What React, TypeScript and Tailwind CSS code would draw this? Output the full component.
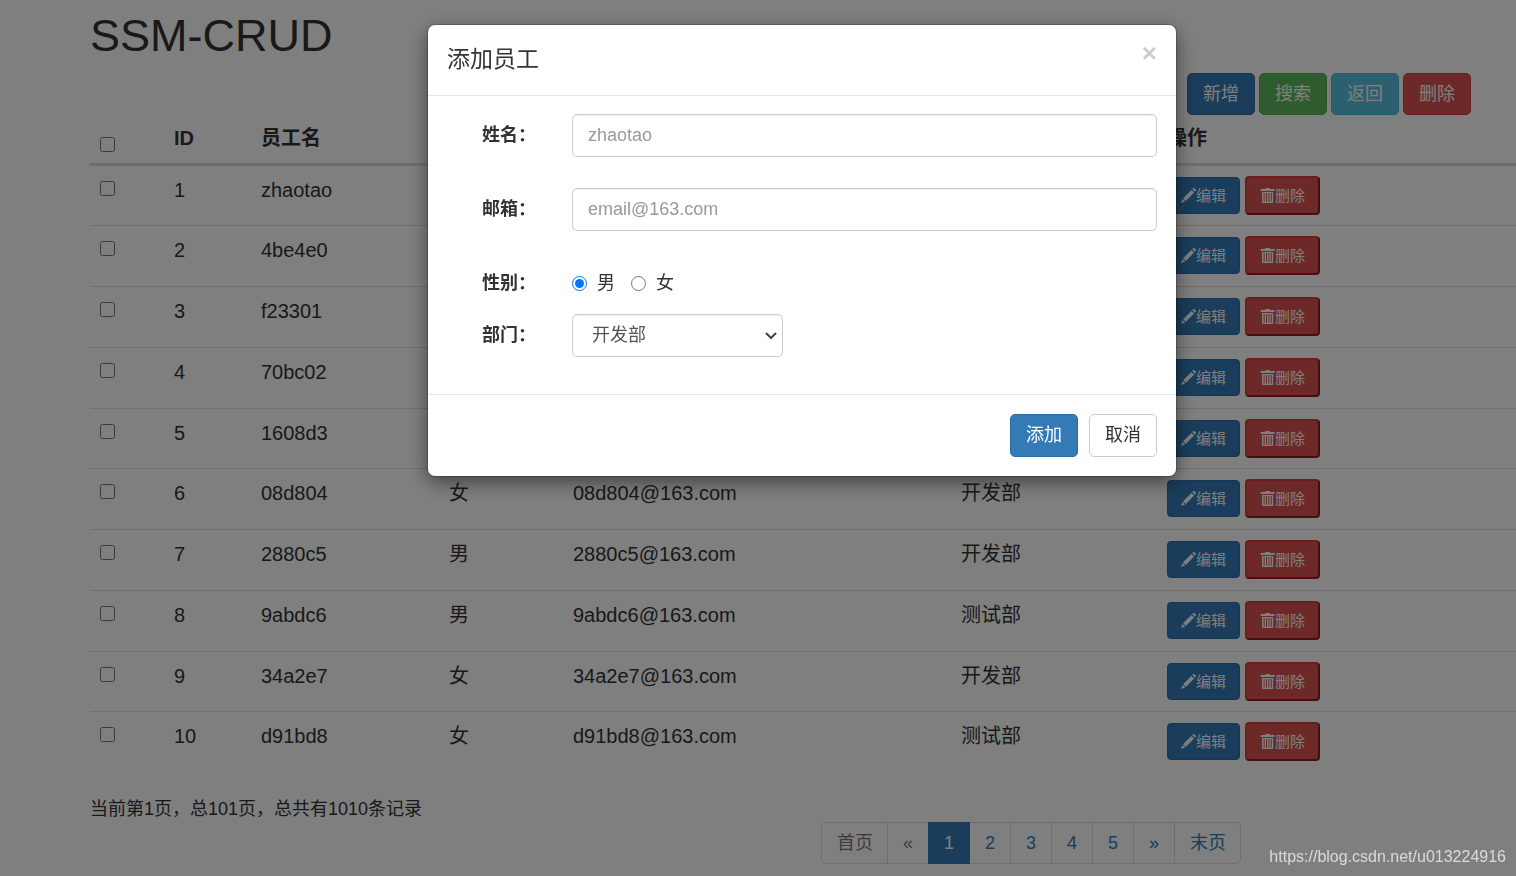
import { useState } from "react";
import clsx from "clsx";

interface Employee {
  id: number;
  name: string;
  gender: string;
  dept: string;
}

const employees: Employee[] = [
  { id: 1, name: "zhaotao", gender: "男", dept: "开发部" },
  { id: 2, name: "4be4e0", gender: "女", dept: "测试部" },
  { id: 3, name: "f23301", gender: "男", dept: "开发部" },
  { id: 4, name: "70bc02", gender: "女", dept: "测试部" },
  { id: 5, name: "1608d3", gender: "男", dept: "开发部" },
  { id: 6, name: "08d804", gender: "女", dept: "开发部" },
  { id: 7, name: "2880c5", gender: "男", dept: "开发部" },
  { id: 8, name: "9abdc6", gender: "男", dept: "测试部" },
  { id: 9, name: "34a2e7", gender: "女", dept: "开发部" },
  { id: 10, name: "d91bd8", gender: "女", dept: "测试部" },
];

const toolbar = [
  { label: "新增", style: "bg-[#337ab7] border-[#2e6da4]" },
  { label: "搜索", style: "bg-[#5cb85c] border-[#4cae4c]" },
  { label: "返回", style: "bg-[#5bc0de] border-[#46b8da]" },
  { label: "删除", style: "bg-[#d9534f] border-[#d43f3a]" },
];

const pages = ["首页", "«", "1", "2", "3", "4", "5", "»", "末页"];

const button = "rounded-[5px] border px-[15px] text-[18px] leading-[25px]";
const field =
  "h-[43px] rounded-[5px] border border-[#ccc] bg-white text-[18px] text-[#555] shadow-[inset_0_1px_1px_rgba(0,0,0,0.075)] outline-none placeholder:text-[#999]";
const label = "w-[126px] shrink-0 pr-[18px] text-right font-bold";

function PencilIcon() {
  return (
    <svg viewBox="0 0 15 15" className="size-[15px]" fill="currentColor" aria-hidden="true">
      <path d="M11.2 1.1l.8-.8a1 1 0 0 1 1.4 0l1.300 1.300a1 1 0 0 1 0 1.400l-.8.8zM10.400 1.900l2.700 2.700-8.300 8.300-2.700-2.700zM1.500 10.900l2.600 2.600L0 15z" />
    </svg>
  );
}

function TrashIcon() {
  return (
    <svg viewBox="0 0 15 15" className="size-[15px]" fill="currentColor" aria-hidden="true">
      <path
        fillRule="evenodd"
        d="M5 1V.6a.6.6 0 0 1 .6-.6h3.800a.6.6 0 0 1 .6.6V1h4a.6.6 0 0 1 .6.6V3H.6V1.600A.6.6 0 0 1 1.200 1zM2 4h11.200v10a1 1 0 0 1-1 1H3a1 1 0 0 1-1-1zM3.600 5v8.700h1V5zM6 5v8.700h1V5zM8.400 5v8.700h1V5zM10.800 5v8.700h1V5z"
      />
    </svg>
  );
}

function EmployeeTable() {
  return (
    <table className="w-full table-fixed border-separate border-spacing-0 text-left text-[20px] leading-[29px]">
      <colgroup>
        <col className="w-[74px]" />
        <col className="w-[87px]" />
        <col className="w-[188px]" />
        <col className="w-[124px]" />
        <col className="w-[388px]" />
        <col className="w-[206px]" />
        <col />
      </colgroup>
      <thead>
        <tr className="[&>th]:border-b-3 [&>th]:border-[#ddd] [&>th]:px-[10px] [&>th]:pt-[9px] [&>th]:pb-[10px] [&>th]:align-bottom">
          <th>
            <input type="checkbox" aria-label="全选" className="mb-px block size-[15px]" />
          </th>
          <th>ID</th>
          <th>员工名</th>
          <th>性别</th>
          <th>邮箱</th>
          <th>部门</th>
          <th>操作</th>
        </tr>
      </thead>
      <tbody>
        {employees.map((e, i) => (
          <tr
            key={e.id}
            className={clsx(
              "[&>td]:px-[10px] [&>td]:py-[10px] [&>td]:align-top",
              i > 0 && "[&>td]:border-t [&>td]:border-[#ddd]",
              i > 0 && (i % 4 === 0 ? "h-[60px]" : "h-[61px]")
            )}
          >
            <td>
              <input type="checkbox" aria-label={`选择 ${e.name}`} className="mt-[5px] block size-[15px]" />
            </td>
            <td>{e.id}</td>
            <td>{e.name}</td>
            <td>{e.gender}</td>
            <td>{e.name}@163.com</td>
            <td>{e.dept}</td>
            <td>
              <div className="flex items-center gap-[5px] text-[15px] leading-[22px] text-white">
                <button className="flex h-[37px] items-center rounded-[4px] border border-[#2e6da4] bg-[#337ab7] px-[13px]">
                  <PencilIcon />
                  编辑
                </button>
                <button className="flex h-[39px] items-center rounded-[4px] border-2 border-t-[#d43f3a] border-l-[#d43f3a] border-r-[#8c1e1a] border-b-[#8c1e1a] bg-[#d9534f] px-[13px]">
                  <TrashIcon />
                  删除
                </button>
              </div>
            </td>
          </tr>
        ))}
      </tbody>
    </table>
  );
}

function Pagination() {
  return (
    <nav className="ml-[731px] flex text-[18px] leading-[25px]">
      {pages.map((p, i) => (
        <a
          key={p}
          href="#"
          className={clsx(
            "-ml-px flex h-[42px] items-center border px-[15px] first:ml-0 first:rounded-l-[5px] first:pr-[14px] last:rounded-r-[5px] last:pr-[14px]",
            p === "1" ? "z-10 border-[#337ab7] bg-[#337ab7] text-white" : "border-[#ddd]",
            i < 2 && "text-[#777]",
            i > 2 && "text-[#337ab7]"
          )}
        >
          {p}
        </a>
      ))}
    </nav>
  );
}

function AddEmployeeDialog() {
  const [gender, setGender] = useState("男");

  return (
    <div className="fixed inset-0 z-20 flex items-start justify-center bg-black/50 pt-[25px] pl-[88px]">
      <div
        role="dialog"
        aria-labelledby="dialog-title"
        className="w-[748px] rounded-[7px] bg-white shadow-[0_6px_19px_rgba(0,0,0,0.5),0_0_0_1px_rgba(0,0,0,0.2)]"
      >
        <div className="flex items-start justify-between border-b border-[#e5e5e5] px-[19px] pt-[18px] pb-[20px]">
          <h4 id="dialog-title" className="text-[23px] leading-[32px]">添加员工</h4>
          <button aria-label="Close" className="text-[26px] leading-[20px] font-bold text-black/20">×</button>
        </div>
        <form className="py-[18px]">
          <div className="mb-[31px] flex items-center">
            <label htmlFor="name" className={label}>姓名：</label>
            <div className="flex-1 pr-[19px] pl-[18px]">
              <input id="name" type="text" placeholder="zhaotao" className={clsx(field, "w-full px-[15px]")} />
            </div>
          </div>
          <div className="mb-[31px] flex items-center">
            <label htmlFor="email" className={label}>邮箱：</label>
            <div className="flex-1 pr-[19px] pl-[18px]">
              <input id="email" type="text" placeholder="email@163.com" className={clsx(field, "w-full px-[15px]")} />
            </div>
          </div>
          <div role="radiogroup" aria-labelledby="gender-label" className="mb-[10px] flex h-[42px] items-center">
            <span id="gender-label" className={label}>性别：</span>
            <div className="flex gap-[16px] px-[18px]">
              {["男", "女"].map((g) => (
                <label key={g} className="flex items-center gap-[10px]">
                  <input type="radio" name="gender" checked={gender === g} onChange={() => setGender(g)} className="size-[15px]" />
                  {g}
                </label>
              ))}
            </div>
          </div>
          <div className="mb-[19px] flex items-center">
            <label htmlFor="dept" className={label}>部门：</label>
            <div className="relative ml-[18px]">
              <select id="dept" className={clsx(field, "w-[211px] appearance-none pr-[30px] pl-[19px]")}>
                <option>开发部</option>
                <option>测试部</option>
              </select>
              <svg
                viewBox="0 0 12 8"
                className="pointer-events-none absolute top-[18px] right-[6px] h-[8px] w-[12px]"
                fill="none"
                stroke="#444"
                strokeWidth="2"
                aria-hidden="true"
              >
                <path d="M1 1l5 5 5-5" />
              </svg>
            </div>
          </div>
        </form>
        <div className="flex justify-end gap-[11px] border-t border-[#e5e5e5] p-[19px]">
          <button className={clsx(button, "h-[43px] border-[#2e6da4] bg-[#337ab7] text-white")}>添加</button>
          <button className={clsx(button, "h-[43px] border-[#ccc] bg-white")}>取消</button>
        </div>
      </div>
    </div>
  );
}

export default function App() {
  return (
    <div className="min-h-screen overflow-hidden bg-white font-['Liberation_Sans','Noto_Sans_CJK_SC',sans-serif] text-[18px] leading-[25px] text-[#333]">
      <div className="pt-[11px] pl-[90px]">
        <h1 className="text-[45px] leading-[50px]">SSM-CRUD</h1>
        <div className="mt-[12px] flex justify-end gap-[4px] pr-[45px]">
          {toolbar.map((b) => (
            <button key={b.label} className={clsx(button, "h-[42px] text-white", b.style)}>{b.label}</button>
          ))}
        </div>
        <EmployeeTable />
        <p className="mt-[25px]">当前第1页，总101页，总共有1010条记录</p>
        <Pagination />
      </div>
      <AddEmployeeDialog />
      <p className="fixed right-[10px] bottom-[8px] z-30 text-[16px] leading-[22px] text-white/70">
        https://blog.csdn.net/u013224916
      </p>
    </div>
  );
}
